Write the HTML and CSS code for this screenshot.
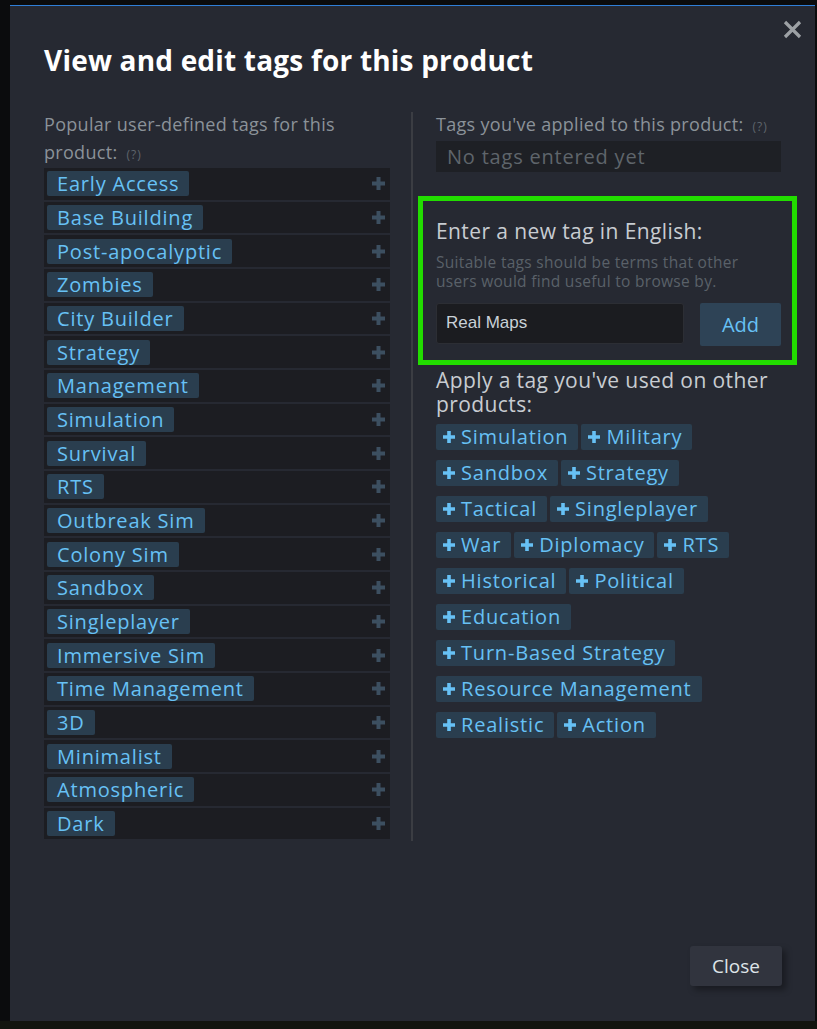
FILE: index.html
```html
<!DOCTYPE html>
<html lang="en">
<head>
<meta charset="utf-8">
<title>Tags</title>
<link rel="stylesheet" href="styles.css">
</head>
<body>
<div class="backdrop">
  <div class="modal">
    <button class="modal-x" aria-label="Close">
      <svg width="19" height="19" viewBox="0 0 19 19"><path d="M2 2 L17 17 M17 2 L2 17" stroke="#9da1a5" stroke-width="3.2" stroke-linecap="butt" fill="none"/></svg>
    </button>
    <h1 class="modal-title">View and edit tags for this product</h1>

    <div class="columns">
      <div class="col col-popular">
        <div class="col-label">Popular user-defined tags for this <span class="nowrap">product: <span class="help">(?)</span></span></div>
        <div class="tag-rows">
          <div class="tag-row"><span class="chip">Early Access</span><svg class="row-plus" viewBox="0 0 13 13"><path d="M6.5 0v13M0 6.5h13" stroke="currentColor" stroke-width="4"/></svg></div>
          <div class="tag-row"><span class="chip">Base Building</span><svg class="row-plus" viewBox="0 0 13 13"><path d="M6.5 0v13M0 6.5h13" stroke="currentColor" stroke-width="4"/></svg></div>
          <div class="tag-row"><span class="chip">Post-apocalyptic</span><svg class="row-plus" viewBox="0 0 13 13"><path d="M6.5 0v13M0 6.5h13" stroke="currentColor" stroke-width="4"/></svg></div>
          <div class="tag-row"><span class="chip">Zombies</span><svg class="row-plus" viewBox="0 0 13 13"><path d="M6.5 0v13M0 6.5h13" stroke="currentColor" stroke-width="4"/></svg></div>
          <div class="tag-row"><span class="chip">City Builder</span><svg class="row-plus" viewBox="0 0 13 13"><path d="M6.5 0v13M0 6.5h13" stroke="currentColor" stroke-width="4"/></svg></div>
          <div class="tag-row"><span class="chip">Strategy</span><svg class="row-plus" viewBox="0 0 13 13"><path d="M6.5 0v13M0 6.5h13" stroke="currentColor" stroke-width="4"/></svg></div>
          <div class="tag-row"><span class="chip">Management</span><svg class="row-plus" viewBox="0 0 13 13"><path d="M6.5 0v13M0 6.5h13" stroke="currentColor" stroke-width="4"/></svg></div>
          <div class="tag-row"><span class="chip">Simulation</span><svg class="row-plus" viewBox="0 0 13 13"><path d="M6.5 0v13M0 6.5h13" stroke="currentColor" stroke-width="4"/></svg></div>
          <div class="tag-row"><span class="chip">Survival</span><svg class="row-plus" viewBox="0 0 13 13"><path d="M6.5 0v13M0 6.5h13" stroke="currentColor" stroke-width="4"/></svg></div>
          <div class="tag-row"><span class="chip">RTS</span><svg class="row-plus" viewBox="0 0 13 13"><path d="M6.5 0v13M0 6.5h13" stroke="currentColor" stroke-width="4"/></svg></div>
          <div class="tag-row"><span class="chip">Outbreak Sim</span><svg class="row-plus" viewBox="0 0 13 13"><path d="M6.5 0v13M0 6.5h13" stroke="currentColor" stroke-width="4"/></svg></div>
          <div class="tag-row"><span class="chip">Colony Sim</span><svg class="row-plus" viewBox="0 0 13 13"><path d="M6.5 0v13M0 6.5h13" stroke="currentColor" stroke-width="4"/></svg></div>
          <div class="tag-row"><span class="chip">Sandbox</span><svg class="row-plus" viewBox="0 0 13 13"><path d="M6.5 0v13M0 6.5h13" stroke="currentColor" stroke-width="4"/></svg></div>
          <div class="tag-row"><span class="chip">Singleplayer</span><svg class="row-plus" viewBox="0 0 13 13"><path d="M6.5 0v13M0 6.5h13" stroke="currentColor" stroke-width="4"/></svg></div>
          <div class="tag-row"><span class="chip">Immersive Sim</span><svg class="row-plus" viewBox="0 0 13 13"><path d="M6.5 0v13M0 6.5h13" stroke="currentColor" stroke-width="4"/></svg></div>
          <div class="tag-row"><span class="chip">Time Management</span><svg class="row-plus" viewBox="0 0 13 13"><path d="M6.5 0v13M0 6.5h13" stroke="currentColor" stroke-width="4"/></svg></div>
          <div class="tag-row"><span class="chip">3D</span><svg class="row-plus" viewBox="0 0 13 13"><path d="M6.5 0v13M0 6.5h13" stroke="currentColor" stroke-width="4"/></svg></div>
          <div class="tag-row"><span class="chip">Minimalist</span><svg class="row-plus" viewBox="0 0 13 13"><path d="M6.5 0v13M0 6.5h13" stroke="currentColor" stroke-width="4"/></svg></div>
          <div class="tag-row"><span class="chip">Atmospheric</span><svg class="row-plus" viewBox="0 0 13 13"><path d="M6.5 0v13M0 6.5h13" stroke="currentColor" stroke-width="4"/></svg></div>
          <div class="tag-row"><span class="chip">Dark</span><svg class="row-plus" viewBox="0 0 13 13"><path d="M6.5 0v13M0 6.5h13" stroke="currentColor" stroke-width="4"/></svg></div>
        </div>
      </div>

      <div class="col-divider"></div>

      <div class="col col-mine">
        <div class="col-label">Tags you've applied to this product: <span class="help">(?)</span></div>
        <div class="applied-empty">No tags entered yet</div>

        <div class="new-tag">
          <div class="new-tag-title">Enter a new tag in English:</div>
          <div class="new-tag-hint">Suitable tags should be terms that other users would find useful to browse by.</div>
          <div class="new-tag-form">
            <input class="new-tag-input" type="text" value="Real Maps">
            <button class="btn-add">Add</button>
          </div>
        </div>

        <div class="used-title">Apply a tag you've used on other products:</div>
        <div class="used-tags">
          <span class="chip chip-add"><svg class="chip-plus" viewBox="0 0 12 12"><path d="M6 0v12M0 6h12" stroke="currentColor" stroke-width="3.6"/></svg>Simulation</span>
          <span class="chip chip-add"><svg class="chip-plus" viewBox="0 0 12 12"><path d="M6 0v12M0 6h12" stroke="currentColor" stroke-width="3.6"/></svg>Military</span>
          <span class="chip chip-add"><svg class="chip-plus" viewBox="0 0 12 12"><path d="M6 0v12M0 6h12" stroke="currentColor" stroke-width="3.6"/></svg>Sandbox</span>
          <span class="chip chip-add"><svg class="chip-plus" viewBox="0 0 12 12"><path d="M6 0v12M0 6h12" stroke="currentColor" stroke-width="3.6"/></svg>Strategy</span>
          <span class="chip chip-add"><svg class="chip-plus" viewBox="0 0 12 12"><path d="M6 0v12M0 6h12" stroke="currentColor" stroke-width="3.6"/></svg>Tactical</span>
          <span class="chip chip-add"><svg class="chip-plus" viewBox="0 0 12 12"><path d="M6 0v12M0 6h12" stroke="currentColor" stroke-width="3.6"/></svg>Singleplayer</span>
          <span class="chip chip-add"><svg class="chip-plus" viewBox="0 0 12 12"><path d="M6 0v12M0 6h12" stroke="currentColor" stroke-width="3.6"/></svg>War</span>
          <span class="chip chip-add"><svg class="chip-plus" viewBox="0 0 12 12"><path d="M6 0v12M0 6h12" stroke="currentColor" stroke-width="3.6"/></svg>Diplomacy</span>
          <span class="chip chip-add"><svg class="chip-plus" viewBox="0 0 12 12"><path d="M6 0v12M0 6h12" stroke="currentColor" stroke-width="3.6"/></svg>RTS</span>
          <span class="chip chip-add"><svg class="chip-plus" viewBox="0 0 12 12"><path d="M6 0v12M0 6h12" stroke="currentColor" stroke-width="3.6"/></svg>Historical</span>
          <span class="chip chip-add"><svg class="chip-plus" viewBox="0 0 12 12"><path d="M6 0v12M0 6h12" stroke="currentColor" stroke-width="3.6"/></svg>Political</span>
          <span class="chip chip-add"><svg class="chip-plus" viewBox="0 0 12 12"><path d="M6 0v12M0 6h12" stroke="currentColor" stroke-width="3.6"/></svg>Education</span>
          <span class="chip chip-add"><svg class="chip-plus" viewBox="0 0 12 12"><path d="M6 0v12M0 6h12" stroke="currentColor" stroke-width="3.6"/></svg>Turn-Based Strategy</span>
          <span class="chip chip-add"><svg class="chip-plus" viewBox="0 0 12 12"><path d="M6 0v12M0 6h12" stroke="currentColor" stroke-width="3.6"/></svg>Resource Management</span>
          <span class="chip chip-add"><svg class="chip-plus" viewBox="0 0 12 12"><path d="M6 0v12M0 6h12" stroke="currentColor" stroke-width="3.6"/></svg>Realistic</span>
          <span class="chip chip-add"><svg class="chip-plus" viewBox="0 0 12 12"><path d="M6 0v12M0 6h12" stroke="currentColor" stroke-width="3.6"/></svg>Action</span>
        </div>
      </div>
    </div>

    <div class="modal-footer">
      <button class="btn-close">Close</button>
    </div>
  </div>
</div>
</body>
</html>
```

FILE: styles.css
```css
* {
  box-sizing: border-box;
}

html, body {
  margin: 0;
  padding: 0;
  background: #0b0c0d;
}

body {
  font-family: "Open Sans", "Noto Sans", sans-serif;
  color: #c3c8cd;
}

.backdrop {
  width: 817px;
  height: 1029px;
  padding: 5px 2px 0 10px;
  background: linear-gradient(to bottom, #0b0c0d 0, #0b0c0d 1021px, #12150f 1021px);
}

.modal {
  position: relative;
  width: 805px;
  height: 1016px;
  background: #262932;
  border-top: 1px solid #2f7fd8;
  padding: 0 34px;
  display: flex;
  flex-direction: column;
}

.modal-x {
  position: absolute;
  top: 14px;
  right: 13px;
  width: 19px;
  height: 19px;
  padding: 0;
  border: 0;
  background: none;
  display: block;
}

.modal-x svg {
  display: block;
}

.modal-title {
  margin: 37px 0 0;
  font-size: 28px;
  line-height: 34px;
  font-weight: 700;
  color: #ffffff;
  letter-spacing: 0.2px;
}

.columns {
  display: flex;
  margin-top: 34px;
}

.col-popular {
  width: 346px;
}

.col-divider {
  width: 2px;
  height: 729px;
  margin: 1px 23px 0 21px;
  background: #3b3d43;
}

.col-mine {
  flex: 1;
}

.col-label {
  font-size: 18px;
  line-height: 27.5px;
  letter-spacing: 0.3px;
  color: #8b9299;
}

.nowrap {
  white-space: nowrap;
}

.help {
  font-size: 12px;
  color: #5e656c;
  margin-left: 4px;
  letter-spacing: 1px;
}

/* popular tags list */
.tag-rows {
  display: flex;
  flex-direction: column;
  gap: 2px;
}

.tag-row {
  height: 31.68px;
  background: #1c1d22;
  display: flex;
  align-items: center;
  justify-content: space-between;
  padding: 0 4px 0 3px;
}

.chip {
  display: inline-flex;
  align-items: center;
  background: #2a3e4f;
  color: #67c1f5;
  font-size: 20px;
  line-height: 25px;
  height: 25px;
  letter-spacing: 0.8px;
  padding: 0 10px;
  border-radius: 2px;
  white-space: nowrap;
}

.row-plus {
  width: 13px;
  height: 13px;
  color: #3c4f60;
  margin-right: 1px;
}

/* applied tags */
.applied-empty {
  height: 31px;
  background: #1e2025;
  color: #5f656b;
  font-size: 20px;
  line-height: 31px;
  letter-spacing: 0.8px;
  padding-left: 11px;
}

.new-tag {
  margin: 24px -16px 0 -18px;
  border: 5px solid #22dd00;
  padding: 17px 11px 14px 13px;
}

.new-tag-title {
  font-size: 21px;
  line-height: 26px;
  letter-spacing: 0.4px;
  color: #c8ccd1;
}

.new-tag-hint {
  margin-top: 9px;
  font-size: 15.5px;
  line-height: 19px;
  letter-spacing: 0.3px;
  color: #5a6169;
}

.new-tag-form {
  display: flex;
  align-items: flex-start;
  gap: 16px;
  margin-top: 12px;
}

.new-tag-input {
  width: 248px;
  height: 41px;
  background: #1b1c20;
  border: 1px solid #2c2e34;
  border-radius: 3px;
  color: #c9d1d8;
  font-family: "Liberation Sans", Arial, sans-serif;
  font-size: 17px;
  padding: 0 9px;
  outline: none;
}

.btn-add {
  width: 81px;
  height: 43px;
  border: 0;
  border-radius: 2px;
  background: #2e4356;
  color: #67c1f5;
  font-family: "Open Sans", "Noto Sans", sans-serif;
  font-size: 20px;
  padding: 0;
}

.used-title {
  margin-top: 3px;
  font-size: 21px;
  line-height: 24px;
  letter-spacing: 0.4px;
  color: #c8ccd1;
}

.used-tags {
  display: flex;
  flex-wrap: wrap;
  gap: 10px 3px;
  margin-top: 8px;
}

.chip-add {
  height: 26px;
  line-height: 26px;
  padding: 0 10px 0 7px;
}

.chip-plus {
  width: 12px;
  height: 12px;
  margin-right: 6px;
  flex: none;
}

/* footer */
.modal-footer {
  margin-top: auto;
  display: flex;
  justify-content: flex-end;
  padding-bottom: 35px;
  margin-right: -1px;
}

.btn-close {
  width: 92px;
  height: 40px;
  border: 0;
  border-radius: 3px;
  background: #31343e;
  color: #dfe4e8;
  font-family: "Open Sans", sans-serif;
  font-size: 19px;
  padding: 0;
  box-shadow: 4px 4px 6px rgba(0, 0, 0, 0.35);
}
```
